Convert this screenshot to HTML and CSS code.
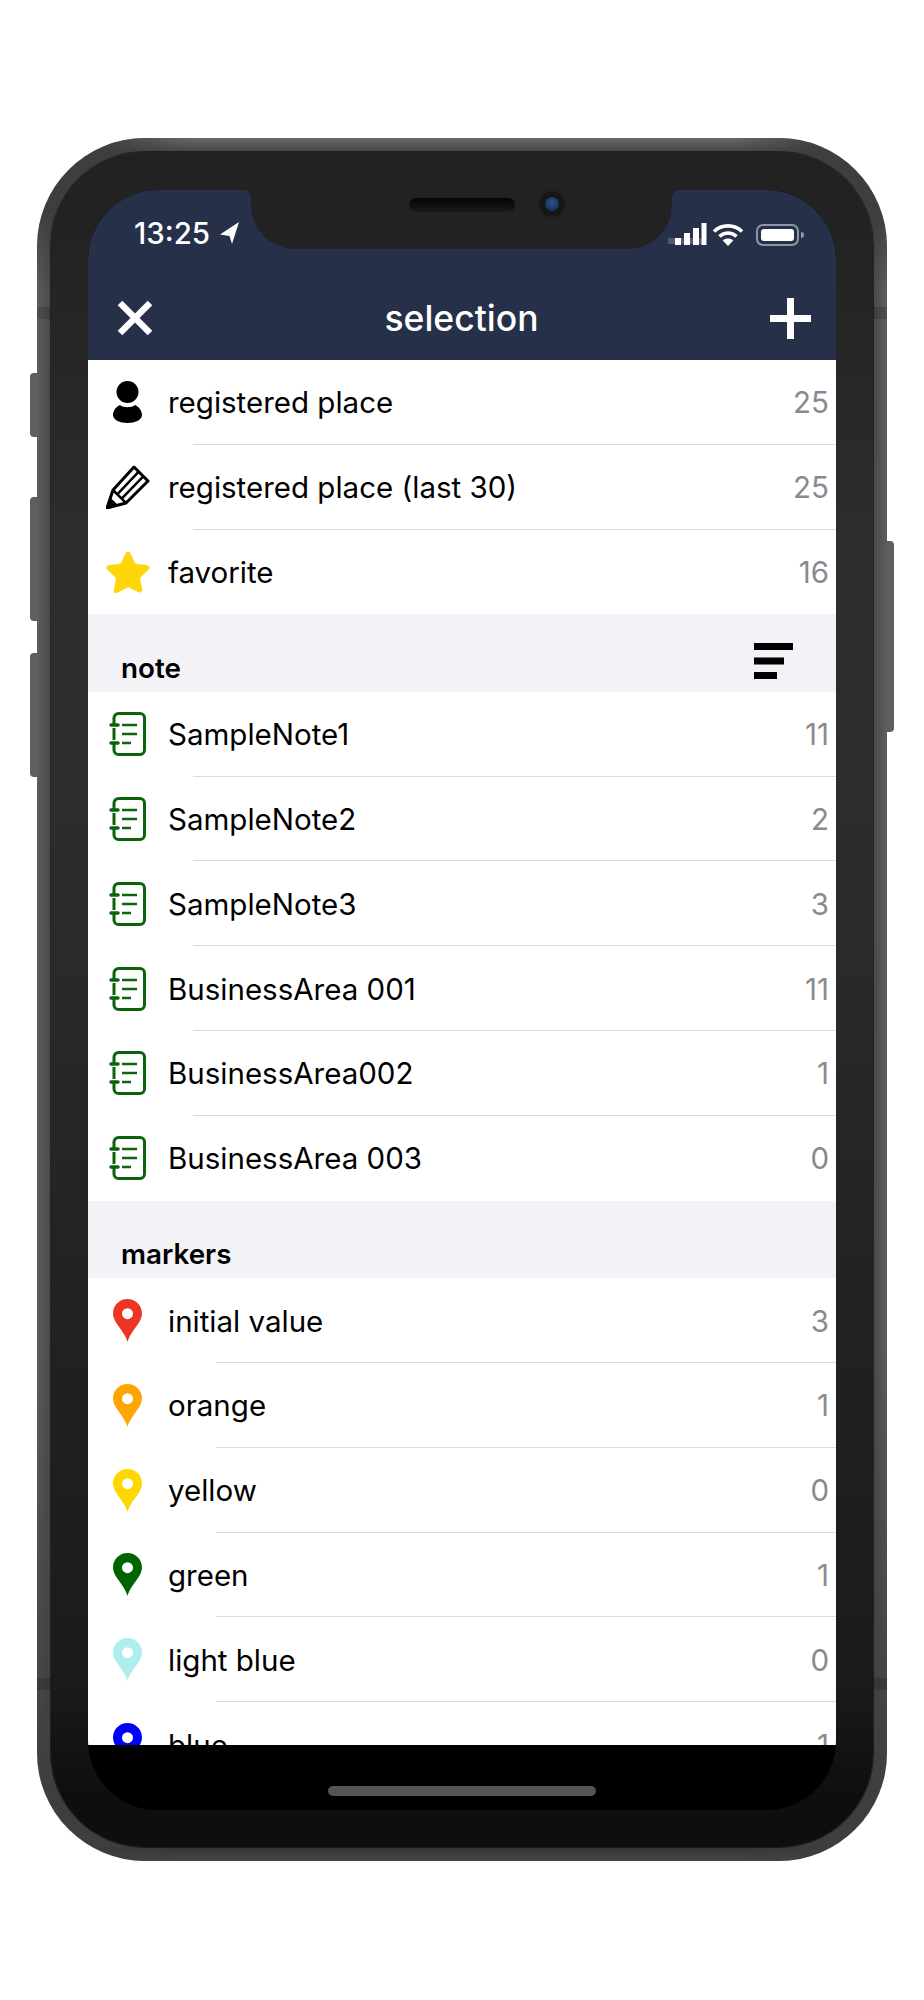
FILE: index.html
```html
<!DOCTYPE html>
<html lang="en">
<head>
    <meta charset="UTF-8">
    <meta name="viewport" content="width=device-width, initial-scale=1.0">
    <title>selection</title>
    <link rel="stylesheet" href="styles.css">
</head>
<body>
    <svg class="sprites" width="0" height="0">
        <symbol id="note" viewBox="0 0 37 44">
            <path d="M5 13V6a4.500 4.500 0 0 1 4.500-4.500H31A4.500 4.500 0 0 1 35.500 6v32a4.500 4.500 0 0 1-4.500 4.500H9.500A4.500 4.500 0 0 1 5 38v-7" fill="none" stroke="#0b640b" stroke-width="3"/>
            <path d="M5 16v12" fill="none" stroke="#0b640b" stroke-width="3"/>
            <path d="M2 13h7M2 31h7" fill="none" stroke="#0b640b" stroke-width="3.500" stroke-linecap="round"/>
            <path d="M13 13h15M13 22h15M13 31h9" fill="none" stroke="#0b640b" stroke-width="2.600"/>
        </symbol>
        <symbol id="pin" viewBox="0 0 29 43">
            <path fill-rule="evenodd" d="M14.500 0C6.500 0 0 6.400 0 14.300c0 4 1.700 7.300 4 10.700 3.800 5.500 8.500 11 10.500 18 2-7 6.700-12.500 10.500-18 2.300-3.400 4-6.700 4-10.700C29 6.400 22.500 0 14.500 0zm0 9.200a5.500 5.500 0 1 1 0 11 5.500 5.500 0 0 1 0-11z"/>
        </symbol>
    </svg>

    <div class="phone">
        <span class="side-btn btn-mute"></span>
        <span class="side-btn btn-up"></span>
        <span class="side-btn btn-down"></span>
        <span class="side-btn-r"></span>
        <span class="band band-l"></span>
        <span class="band band-r"></span>
        <span class="band band-bl"></span>
        <span class="band band-br"></span>

        <div class="bezel">
            <div class="screen">
                <div class="notch">
                    <span class="speaker"></span>
                    <span class="camera"></span>
                </div>

                <div class="status">
                    <div class="time">
                        13:25
                        <svg class="loc" width="19" height="22" viewBox="0 0 19 22"><path d="M19 0 0 12.500l9.500 1.500L12 22z" fill="#fff"/></svg>
                    </div>
                    <div class="status-icons">
                        <svg width="39" height="23" viewBox="0 0 39 23">
                            <path d="M0 15h38v6H0z" fill="#fff" opacity=".2"/>
                            <path d="M7 15h6v7H7zM16 10h6v12h-6zM25 5h6v17h-6zM33.500 0h5v22h-5z" fill="#fff"/>
                        </svg>
                        <svg width="32" height="23" viewBox="0 0 32 23">
                            <path d="M2 8.500C9.500 1 22.500 1 30 8.500" fill="none" stroke="#fff" stroke-width="3.600"/>
                            <path d="M7.500 13.500c4.800-4.600 12.200-4.600 17 0" fill="none" stroke="#fff" stroke-width="3.600"/>
                            <path d="M16 23l-5.300-5.600c3-2.500 7.600-2.500 10.600 0z" fill="#fff"/>
                        </svg>
                        <span class="battery"><span class="battery-fill"></span></span>
                    </div>
                </div>

                <div class="navbar">
                    <svg width="36" height="36" viewBox="0 0 36 36"><path d="M3 3l30 30M33 3L3 33" stroke="#fff" stroke-width="6.500"/></svg>
                    <div class="nav-title">selection</div>
                    <svg width="41" height="41" viewBox="0 0 41 41"><path d="M20.500 0v41M0 20.500h41" stroke="#fff" stroke-width="7"/></svg>
                </div>

                <div class="list">
                    <div class="row">
                        <span class="row-icon">
                            <svg width="29" height="42" viewBox="0 0 29 42"><circle cx="14.500" cy="11" r="11"/><path d="M7 24c3 3 12 3 15 0 4 1.500 7 6 7 10 0 5-7 8-14.500 8S0 39 0 34c0-4 3-8.500 7-10z"/></svg>
                        </span>
                        <span class="row-label">registered place</span>
                        <span class="row-count">25</span>
                    </div>
                    <div class="row">
                        <span class="row-icon">
                            <svg width="44" height="44" viewBox="0 0 44 44">
                                <path d="M1 43L7 25 28 2 42 16 20 38z" fill="#fff" stroke="#000" stroke-width="3" stroke-linejoin="round"/>
                                <path d="M1 43l2.500-11 8.500 8z"/>
                                <path d="M11.300 29.300L32.700 6.700M15.700 33.700L37.300 11.300M7 25l4.300 4.300 4.400 4.400L20 38" fill="none" stroke="#000" stroke-width="2.500"/>
                            </svg>
                        </span>
                        <span class="row-label">registered place (last 30)</span>
                        <span class="row-count">25</span>
                    </div>
                    <div class="row row-last">
                        <span class="row-icon">
                            <svg width="44" height="42" viewBox="0 0 44 42"><path d="M22 3l5.700 11.900 13.300 1.800-9.700 9.200 2.400 13.100L22 33.600 10.300 39.500l2.400-13.100L3 16.700l13.300-1.800z" fill="#ffd60a" stroke="#ffd60a" stroke-width="5" stroke-linejoin="round"/></svg>
                        </span>
                        <span class="row-label">favorite</span>
                        <span class="row-count">16</span>
                    </div>

                    <div class="section">
                        <span>note</span>
                        <svg class="sort-icon" width="40" height="36" viewBox="0 0 40 36"><path d="M0 0h39v7H0zM0 14.500h30v7H0zM0 29h23v7H0z"/></svg>
                    </div>
                    <div class="row"><span class="row-icon"><svg class="note-icon"><use href="#note"/></svg></span><span class="row-label">SampleNote1</span><span class="row-count">11</span></div>
                    <div class="row"><span class="row-icon"><svg class="note-icon"><use href="#note"/></svg></span><span class="row-label">SampleNote2</span><span class="row-count">2</span></div>
                    <div class="row"><span class="row-icon"><svg class="note-icon"><use href="#note"/></svg></span><span class="row-label">SampleNote3</span><span class="row-count">3</span></div>
                    <div class="row"><span class="row-icon"><svg class="note-icon"><use href="#note"/></svg></span><span class="row-label">BusinessArea 001</span><span class="row-count">11</span></div>
                    <div class="row"><span class="row-icon"><svg class="note-icon"><use href="#note"/></svg></span><span class="row-label">BusinessArea002</span><span class="row-count">1</span></div>
                    <div class="row row-last"><span class="row-icon"><svg class="note-icon"><use href="#note"/></svg></span><span class="row-label">BusinessArea 003</span><span class="row-count">0</span></div>

                    <div class="section">
                        <span>markers</span>
                    </div>
                    <div class="row row-marker"><span class="row-icon"><svg class="pin pin-red"><use href="#pin"/></svg></span><span class="row-label">initial value</span><span class="row-count">3</span></div>
                    <div class="row row-marker"><span class="row-icon"><svg class="pin pin-orange"><use href="#pin"/></svg></span><span class="row-label">orange</span><span class="row-count">1</span></div>
                    <div class="row row-marker"><span class="row-icon"><svg class="pin pin-yellow"><use href="#pin"/></svg></span><span class="row-label">yellow</span><span class="row-count">0</span></div>
                    <div class="row row-marker"><span class="row-icon"><svg class="pin pin-green"><use href="#pin"/></svg></span><span class="row-label">green</span><span class="row-count">1</span></div>
                    <div class="row row-marker"><span class="row-icon"><svg class="pin pin-cyan"><use href="#pin"/></svg></span><span class="row-label">light blue</span><span class="row-count">0</span></div>
                    <div class="row row-marker"><span class="row-icon"><svg class="pin pin-blue"><use href="#pin"/></svg></span><span class="row-label">blue</span><span class="row-count">1</span></div>
                </div>

                <div class="home-area">
                    <span class="home-bar"></span>
                </div>
            </div>
        </div>
    </div>
</body>
</html>
```

FILE: styles.css
```css
* {
    margin: 0;
    padding: 0;
    box-sizing: border-box;
}

body {
    font-family: Inter, "Liberation Sans", sans-serif;
    background-color: #fff;
    color: #000;
}

.sprites {
    position: absolute;
}

svg {
    display: block;
}

/* device frame */
.phone {
    position: relative;
    width: 850px;
    height: 1723px;
    margin: 138px 0 0 37px;
    padding: 14px;
    border-radius: 108px;
    background-color: #3e3e3e;
}

/* lighter metal along the straight edges, fading out into the corners */
.phone::before, .phone::after {
    content: "";
    position: absolute;
    inset: 0;
    border-radius: inherit;
}

.phone::before {
    background:
        linear-gradient(to right, #5e5e5e, #484848) left top / 14px 100% no-repeat,
        linear-gradient(to left, #5e5e5e, #484848) right top / 14px 100% no-repeat;
    -webkit-mask-image: linear-gradient(to bottom, transparent 70px, #000 150px, #000 70%, transparent 97%);
    mask-image: linear-gradient(to bottom, transparent 70px, #000 150px, #000 70%, transparent 97%);
}

.phone::after {
    z-index: 0;
    background:
        linear-gradient(to bottom, #686868, #444) left top / 100% 14px no-repeat,
        linear-gradient(to bottom, #343434, #474747) left bottom / 100% 14px no-repeat;
    -webkit-mask-image: linear-gradient(to right, transparent 60px, #000 150px, #000 calc(100% - 150px), transparent calc(100% - 60px));
    mask-image: linear-gradient(to right, transparent 60px, #000 150px, #000 calc(100% - 150px), transparent calc(100% - 60px));
}

.bezel {
    position: relative;
    z-index: 1;
    height: 100%;
    padding: 38px 37px 37px;
    border-radius: 94px;
    background: linear-gradient(to bottom, #222 0, #222 4%, #2e2e2e 25%, #2b2b2b 45%, #222 67%, #1b1b1b 90%, #0e0e0e 97%);
    box-shadow: 0 0 0 1px rgba(0, 0, 0, 0.5);
}

.side-btn, .side-btn-r {
    position: absolute;
    width: 8px;
    background-color: #5e5e5e;
}

.side-btn {
    left: -7px;
    border-radius: 4px 0 0 4px;
}

.btn-mute { top: 235px; height: 64px; }
.btn-up { top: 359px; height: 124px; }
.btn-down { top: 515px; height: 124px; }

.side-btn-r {
    right: -7px;
    top: 403px;
    height: 191px;
    border-radius: 0 4px 4px 0;
}

.band {
    position: absolute;
    z-index: 1;
    width: 14px;
    height: 12px;
    background-color: rgba(0, 0, 0, 0.16);
}

.band-l { left: 0; top: 169px; }
.band-r { right: 0; top: 169px; }
.band-bl { left: 0; top: 1540px; }
.band-br { right: 0; top: 1540px; }

/* screen */
.screen {
    position: relative;
    display: flex;
    flex-direction: column;
    height: 100%;
    overflow: hidden;
    border-radius: 70px;
    background-color: #000;
}

.notch {
    position: absolute;
    top: 0;
    left: 163px;
    width: 421px;
    height: 59px;
    border-radius: 0 0 44px 44px;
    background-color: #222;
}

.notch::before, .notch::after {
    content: "";
    position: absolute;
    top: 0;
    width: 8px;
    height: 8px;
}

.notch::before {
    left: -8px;
    background: radial-gradient(circle at 0 100%, transparent 8px, #222 8.5px);
}

.notch::after {
    right: -8px;
    background: radial-gradient(circle at 100% 100%, transparent 8px, #222 8.5px);
}

.speaker {
    position: absolute;
    left: 158px;
    top: 8px;
    width: 106px;
    height: 14px;
    border-radius: 7px;
    background: linear-gradient(to bottom, #050505, #1a1a1a);
}

.camera {
    position: absolute;
    left: 288px;
    top: 1px;
    width: 26px;
    height: 26px;
    border: 6px solid #161616;
    border-radius: 50%;
    background: radial-gradient(circle at 50% 40%, #2a4f86, #14294a);
}

.status {
    display: flex;
    justify-content: space-between;
    align-items: flex-start;
    height: 90px;
    padding: 26px 37px 0 46px;
    background-color: #263048;
    color: #fff;
}

.time {
    display: flex;
    align-items: center;
    gap: 10px;
    font-size: 29.5px;
    font-weight: 500;
    line-height: 34px;
}

.status-icons {
    display: flex;
    align-items: flex-end;
    gap: 5px;
    height: 30px;
    padding-top: 5px;
}

.battery {
    position: relative;
    width: 43px;
    height: 22px;
    margin-left: 7px;
    padding: 3px;
    border: 2px solid #8f97a6;
    border-radius: 7px;
}

.battery::after {
    content: "";
    position: absolute;
    right: -7px;
    top: 6px;
    width: 3px;
    height: 6px;
    border-radius: 0 3px 3px 0;
    background-color: #8f97a6;
}

.battery-fill {
    display: block;
    height: 100%;
    border-radius: 3px;
    background-color: #fff;
}

.navbar {
    display: flex;
    justify-content: space-between;
    align-items: center;
    height: 80px;
    padding: 0 25px 4px 29px;
    background-color: #263048;
    color: #fff;
}

.nav-title {
    font-size: 35.5px;
    font-weight: 500;
}

/* list */
.list {
    flex: 1;
    overflow: hidden;
    background-color: #fff;
}

.row {
    position: relative;
    display: flex;
    align-items: center;
    height: 84.8px;
    padding-right: 7px;
    font-size: 29.5px;
}

.row::after {
    content: "";
    position: absolute;
    left: 105px;
    right: 0;
    bottom: 0;
    height: 1px;
    background-color: #dcdcde;
}

.row-marker::after {
    left: 128px;
}

.row-last::after {
    display: none;
}

.row-icon {
    display: flex;
    justify-content: center;
    width: 79px;
    margin-right: 1px;
}

.row-label {
    flex: 1;
}

.row-count {
    color: #8a8a8e;
}

.note-icon {
    width: 37px;
    height: 44px;
}

.pin {
    width: 29px;
    height: 43px;
}

.pin-red { fill: #ee3524; }
.pin-orange { fill: #ffa500; }
.pin-yellow { fill: #ffd700; }
.pin-green { fill: #006400; }
.pin-cyan { fill: #aeeeee; }
.pin-blue { fill: #0000ff; }

.section {
    display: flex;
    justify-content: space-between;
    align-items: flex-end;
    height: 77.5px;
    padding: 0 42px 8px 33px;
    background-color: #f2f2f7;
    font-size: 27.8px;
    font-weight: 600;
    line-height: 32px;
}

.sort-icon {
    margin-bottom: 5px;
}

.home-area {
    display: flex;
    justify-content: center;
    height: 65px;
    padding-top: 41px;
    background-color: #000;
}

.home-bar {
    width: 268px;
    height: 10px;
    border-radius: 5px;
    background-color: #555;
}
```
